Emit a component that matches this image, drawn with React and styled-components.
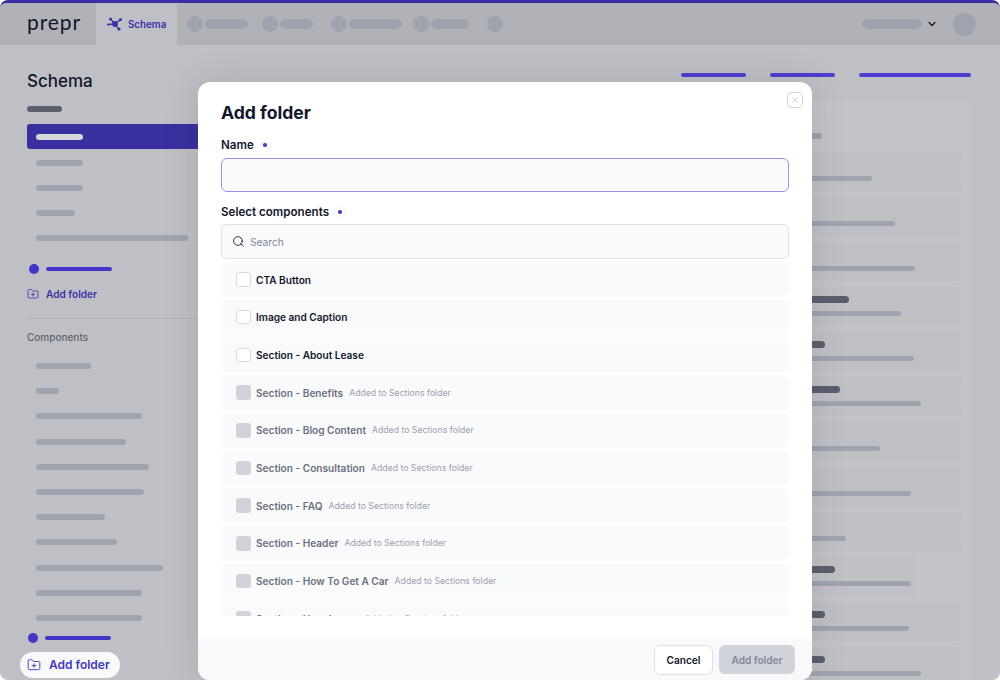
import React from "react";
import styled, { createGlobalStyle } from "styled-components";
import { FolderPlus, Search, X, ChevronDown } from "lucide-react";

const Global = createGlobalStyle`
  html, body { margin: 0; padding: 0; background: #fff; }
  body { font-family: Inter, "Liberation Sans", sans-serif; }
  * { box-sizing: border-box; }
`;

const Frame = styled.div`
  position: relative;
  width: 1000px;
  height: 680px;
  overflow: hidden;
  border-radius: 8px;
  background: #bfc0c5;
  border-top: 3px solid #3930a6;
`;

const TopBar = styled.header`
  display: flex;
  align-items: center;
  height: 42px;
  background: #b1b2b7;
  padding-right: 24px;
`;
const Brand = styled.div`
  width: 96px;
  padding-left: 27px;
  font: 400 21px/42px Lato, Inter, sans-serif;
  letter-spacing: 0.9px;
  color: #12172a;
  padding-bottom: 4px;
`;
const ActiveTab = styled.div`
  display: flex;
  align-items: center;
  gap: 5px;
  width: 81px;
  height: 42px;
  padding-left: 11px;
  background: #bfc0c5;
  color: #3a32a8;
  font-size: 9.8px;
  font-weight: 600;
`;
const NavSlot = styled.div`
  display: flex;
  align-items: center;
  gap: 2px;
  margin-left: ${(p) => p.$ml}px;
`;
const NavDot = styled.span`
  width: 16px;
  height: 16px;
  border-radius: 50%;
  background: #9ea4af;
`;
const NavPill = styled.span`
  width: ${(p) => p.$w}px;
  height: 10px;
  border-radius: 5px;
  background: #9ea4af;
`;
const Spacer = styled.div`
  flex: 1;
`;
const Account = styled.div`
  display: flex;
  align-items: center;
  gap: 4px;
  color: #12172a;
`;
const Avatar = styled.span`
  width: 23px;
  height: 23px;
  border-radius: 50%;
  background: #9ea4af;
  margin-left: 11px;
`;

const Main = styled.div`
  display: flex;
  height: 635px;
`;
const Sidebar = styled.aside`
  display: flex;
  flex-direction: column;
  align-items: flex-start;
  width: 640px;
  flex: none;
  padding: 25px 0 0 27px;
`;
const PageTitle = styled.h1`
  margin: 0;
  font-size: 17px;
  line-height: 22px;
  font-weight: 500;
  color: #12172a;
`;
const GroupBar = styled.span`
  display: block;
  width: 35px;
  height: 6px;
  margin-top: 14px;
  border-radius: 3px;
  background: #5a5e6d;
`;
const ActiveItem = styled.div`
  display: flex;
  align-items: center;
  width: 200px;
  height: 25px;
  margin-top: 12px;
  padding-left: 9px;
  border-radius: 3px;
  background: #38309f;
`;
const ActivePill = styled.span`
  width: 47px;
  height: 6px;
  border-radius: 3px;
  background: #d5d6da;
`;
const SkeletonList = styled.div`
  display: flex;
  flex-direction: column;
  gap: ${(p) => p.$gap}px;
  margin-top: ${(p) => p.$mt}px;
  padding-left: 9px;
`;
const Pill = styled.span`
  display: block;
  height: 6px;
  border-radius: 3px;
  background: #9ea4af;
`;
const FolderLine = styled.div`
  display: flex;
  align-items: center;
  gap: 7px;
  margin-top: ${(p) => p.$mt}px;
  margin-left: ${(p) => p.$ml}px;
`;
const FolderDot = styled.span`
  width: 10px;
  height: 10px;
  border-radius: 50%;
  background: #4136c8;
`;
const FolderBar = styled.span`
  width: 66px;
  height: 4px;
  border-radius: 2px;
  background: #4136c8;
`;
const AddLink = styled.div`
  display: flex;
  align-items: center;
  gap: 7px;
  margin-top: 13px;
  height: 14px;
  color: #3a32a8;
  font-size: 10.1px;
  font-weight: 600;
`;
const Divider = styled.hr`
  width: 175px;
  margin: 17px 0 0;
  border: 0;
  border-top: 1px solid #b0b2b8;
`;
const SectionLabel = styled.div`
  margin-top: 11px;
  font-size: 10px;
  line-height: 14px;
  font-weight: 500;
  color: #5f6472;
`;
const HighlightAdd = styled.div`
  display: flex;
  align-items: center;
  gap: 8px;
  width: 100px;
  height: 26px;
  margin: 9px 0 0 -7px;
  padding-left: 7px;
  border-radius: 13px;
  background: #f8f9fb;
  color: #4136c8;
  font-size: 12px;
  font-weight: 600;
`;

const Content = styled.section`
  flex: 1;
  padding: 28px 28px 0 0;
  display: flex;
  flex-direction: column;
  min-width: 0;
`;
const TabBars = styled.div`
  display: flex;
  justify-content: flex-end;
  gap: 24px;
  height: 4px;
  margin-right: 1px;
`;
const TabBar = styled.span`
  width: ${(p) => p.$w}px;
  height: 4px;
  border-radius: 2px;
  background: #4a3fd0;
`;
const Panel = styled.div`
  margin-top: 24px;
  height: 600px;
  padding: 32px 11px 0 10px;
  border-radius: 6px;
  background: #c3c4c8;
`;
const PanelHead = styled.span`
  display: block;
  width: 122px;
  height: 6px;
  border-radius: 3px;
  background: #9ea4af;
  margin-left: 50px;
`;
const Rows = styled.div`
  display: flex;
  flex-direction: column;
  gap: 6px;
  margin-top: 13px;
`;
const Row = styled.div`
  display: flex;
  flex-direction: column;
  justify-content: flex-end;
  align-items: flex-start;
  gap: 8px;
  width: ${(p) => (p.$narrow ? "265px" : "auto")};
  height: 39px;
  padding: 0 0 10px 60px;
  border-radius: 4px;
  background: ${(p) => (p.$narrow ? "#c0c1c5" : "#bfc0c4")};
`;
const DarkBar = styled.span`
  display: block;
  height: 7px;
  border-radius: 3.5px;
  background: #5a5e6d;
`;
const LightBar = styled.span`
  display: block;
  height: 5px;
  border-radius: 2.5px;
  background: #9ea4af;
`;

const Modal = styled.div`
  position: absolute;
  left: 198px;
  top: 79px;
  width: 614px;
  height: 598px;
  display: flex;
  flex-direction: column;
  border-radius: 12px;
  background: #fff;
  box-shadow: 0 0 36px rgba(40, 42, 55, 0.14);
  overflow: hidden;
`;
const CloseBtn = styled.button`
  position: absolute;
  top: 10px;
  right: 9px;
  display: flex;
  align-items: center;
  justify-content: center;
  width: 16px;
  height: 16px;
  padding: 0;
  border: 1.5px solid #d5d7df;
  border-radius: 4px;
  background: #fff;
  color: #c4c7d0;
`;
const Body = styled.div`
  flex: 1;
  min-height: 0;
  display: flex;
  flex-direction: column;
  padding: 19px 23px 23px;
`;
const Title = styled.h2`
  margin: 0;
  font-size: 17.6px;
  line-height: 24px;
  font-weight: 700;
  color: #12172a;
`;
const Label = styled.div`
  display: flex;
  align-items: center;
  gap: 4px;
  margin-top: ${(p) => p.$mt}px;
  height: 16px;
  font-size: 11.6px;
  font-weight: 600;
  color: #12172a;
`;
const Required = styled.span`
  display: flex;
  align-items: center;
  justify-content: center;
  width: 14px;
  height: 14px;
  border-radius: 50%;
  background: #f9fafc;
  &::before {
    content: "";
    width: 3.5px;
    height: 3.5px;
    border-radius: 50%;
    background: #4a3fd0;
  }
`;
const NameInput = styled.div`
  height: 34px;
  margin-top: 5px;
  border: 1px solid #9a91e8;
  border-radius: 6px;
  background: #f9fafc;
`;
const SearchBox = styled.div`
  display: flex;
  align-items: center;
  gap: 5px;
  height: 35px;
  margin-top: 4px;
  padding-left: 10px;
  border: 1px solid #dfe1e7;
  border-radius: 6px;
  background: #f9fafc;
  color: #2a2f40;
  font-size: 10.2px;
`;
const Placeholder = styled.span`
  color: #80859a;
  font-weight: 400;
`;
const List = styled.div`
  flex: 1;
  min-height: 0;
  margin-top: 3px;
  display: flex;
  flex-direction: column;
  gap: 2.7px;
  overflow: hidden;
`;
const Item = styled.div`
  flex: none;
  display: flex;
  align-items: center;
  height: 35px;
  padding-left: 15px;
  border-radius: 6px;
  background: #f9fafc;
`;
const Check = styled.span`
  flex: none;
  width: 14.5px;
  height: 14.5px;
  border-radius: 3px;
  border: ${(p) => (p.$disabled ? "0" : "1px solid #d8dbe2")};
  background: ${(p) => (p.$disabled ? "#d0d3da" : "#fff")};
`;
const ItemName = styled.span`
  margin-left: 5.5px;
  font-size: 10.1px;
  font-weight: 600;
  color: ${(p) => (p.$disabled ? "#6b7080" : "#12172a")};
`;
const ItemNote = styled.span`
  margin-left: 6px;
  font-size: 8.7px;
  color: #9da1ae;
`;
const Footer = styled.footer`
  flex: none;
  display: flex;
  justify-content: flex-end;
  align-items: center;
  gap: 6px;
  height: 41px;
  padding: 0 17px 0 0;
  background: #f8f9fb;
`;
const Cancel = styled.button`
  width: 59px;
  height: 30px;
  border: 1px solid #dfe1e7;
  border-radius: 6px;
  background: #fff;
  color: #12172a;
  font: 600 10.1px Inter, sans-serif;
`;
const Submit = styled.button`
  width: 76px;
  height: 29px;
  border: 0;
  border-radius: 6px;
  background: #d0d3da;
  color: #838897;
  font: 600 10.1px Inter, sans-serif;
`;

const SchemaIcon = () => (
  <svg width="16" height="14" viewBox="0 0 16 14" fill="none">
    <g stroke="#3a32a8" strokeWidth="1.3">
      <path d="M8 7 3.5 2M8 7l5-4M8 7 1 7.5M8 7l3.5 5" />
    </g>
    <g fill="#3a32a8">
      <circle cx="8" cy="7" r="2.9" />
      <circle cx="3.5" cy="2" r="1.5" />
      <circle cx="13.5" cy="2.5" r="1.5" />
      <circle cx="1" cy="7.5" r="1" />
      <circle cx="12" cy="12" r="1.6" />
    </g>
  </svg>
);

const navSlots = [
  { ml: 10, w: 43 },
  { ml: 14, w: 33 },
  { ml: 18, w: 53 },
  { ml: 11, w: 38 },
  { ml: 18, w: 0 },
];
const topPills = [47, 47, 39, 152];
const compPills = [55, 23, 106, 90, 113, 108, 69, 81, 127, 106, 106];
const START = 710;
const rowData = [
  { l: 872 },
  { l: 895 },
  { l: 915 },
  { d: 849, l: 901 },
  { d: 825, l: 914 },
  { d: 840, l: 921 },
  { l: 880 },
  { l: 911 },
  { l: 846 },
  { d: 835, l: 911, narrow: true },
  { d: 825, l: 909 },
  { d: 825, l: 921 },
];
const items = [
  ["CTA Button"],
  ["Image and Caption"],
  ["Section - About Lease"],
  ["Section - Benefits", true],
  ["Section - Blog Content", true],
  ["Section - Consultation", true],
  ["Section - FAQ", true],
  ["Section - Header", true],
  ["Section - How To Get A Car", true],
  ["Section - Hero Image", true],
];

export default function App() {
  return (
    <Frame>
      <Global />
      <TopBar>
        <Brand>prepr</Brand>
        <ActiveTab>
          <SchemaIcon />
          Schema
        </ActiveTab>
        {navSlots.map((s, i) => (
          <NavSlot key={i} $ml={s.ml}>
            <NavDot />
            {s.w > 0 && <NavPill $w={s.w} />}
          </NavSlot>
        ))}
        <Spacer />
        <Account>
          <NavPill $w={60} />
          <ChevronDown size={12} strokeWidth={2.4} />
          <Avatar />
        </Account>
      </TopBar>
      <Main>
        <Sidebar>
          <PageTitle>Schema</PageTitle>
          <GroupBar />
          <ActiveItem>
            <ActivePill />
          </ActiveItem>
          <SkeletonList $gap={19} $mt={11}>
            {topPills.map((w, i) => (
              <Pill key={i} style={{ width: w }} />
            ))}
          </SkeletonList>
          <FolderLine $mt={23} $ml={2}>
            <FolderDot />
            <FolderBar />
          </FolderLine>
          <AddLink>
            <FolderPlus size={12} strokeWidth={1.6} />
            Add folder
          </AddLink>
          <Divider />
          <SectionLabel>Components</SectionLabel>
          <SkeletonList $gap={19.2} $mt={19}>
            {compPills.map((w, i) => (
              <Pill key={i} style={{ width: w }} />
            ))}
          </SkeletonList>
          <FolderLine $mt={12} $ml={1}>
            <FolderDot />
            <FolderBar />
          </FolderLine>
          <HighlightAdd>
            <FolderPlus size={14} strokeWidth={1.6} />
            Add folder
          </HighlightAdd>
        </Sidebar>
        <Content>
          <TabBars>
            <TabBar $w={65} />
            <TabBar $w={65} />
            <TabBar $w={112} />
          </TabBars>
          <Panel>
            <PanelHead />
            <Rows>
              {rowData.map((r, i) => (
                <Row key={i} $narrow={r.narrow}>
                  {r.d && <DarkBar style={{ width: r.d - START }} />}
                  <LightBar style={{ width: r.l - START }} />
                </Row>
              ))}
            </Rows>
          </Panel>
        </Content>
      </Main>
      <Modal>
        <CloseBtn>
          <X size={10} strokeWidth={1.6} />
        </CloseBtn>
        <Body>
          <Title>Add folder</Title>
          <Label $mt={12}>
            Name
            <Required />
          </Label>
          <NameInput />
          <Label $mt={12}>
            Select components
            <Required />
          </Label>
          <SearchBox>
            <Search size={13} strokeWidth={1.8} />
            <Placeholder>Search</Placeholder>
          </SearchBox>
          <List>
            {items.map(([name, disabled]) => (
              <Item key={name}>
                <Check $disabled={disabled} />
                <ItemName $disabled={disabled}>{name}</ItemName>
                {disabled && <ItemNote>Added to Sections folder</ItemNote>}
              </Item>
            ))}
          </List>
        </Body>
        <Footer>
          <Cancel>Cancel</Cancel>
          <Submit>Add folder</Submit>
        </Footer>
      </Modal>
    </Frame>
  );
}
